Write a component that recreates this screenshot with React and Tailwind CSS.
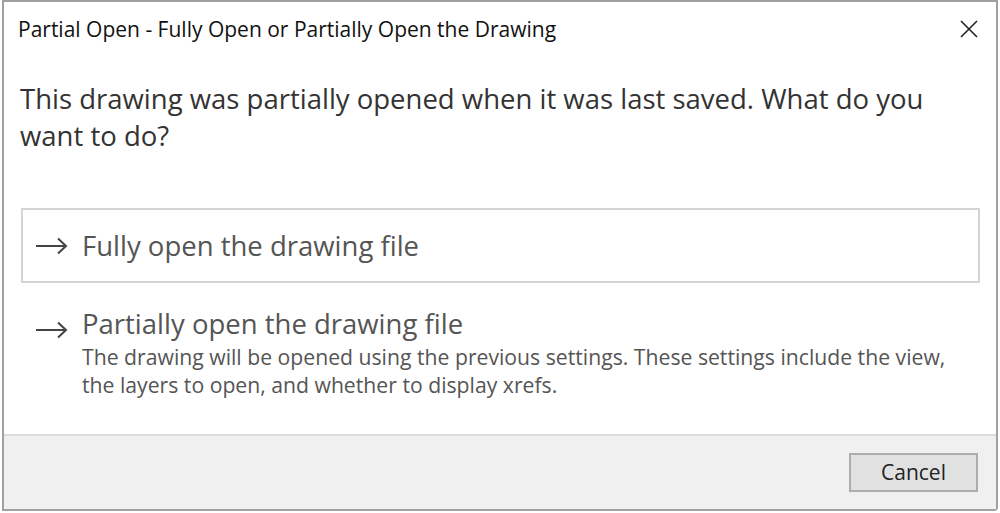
export default function App() {
  const font = { fontFamily: '"Open Sans", "Noto Sans", sans-serif' };
  const Arrow = () => (
    <svg width="34" height="20" viewBox="0 0 34 20" className="shrink-0">
      <path d="M1 10 H31 M23 2.5 L31 10 L23 17.5" fill="none" stroke="#444" strokeWidth="2" />
    </svg>
  );
  return (
    <div className="w-[1000px] h-[513px] bg-white" style={font}>
      <div className="ml-[2px] w-[996px] h-[511px] border-2 border-[#a0a0a0] rounded-br-[4px] flex flex-col bg-white">
        <div className="h-[56px] flex items-start justify-between pl-[14px] pr-[18px] pt-[14px]">
          <div className="text-[21px] leading-[26px] text-[#111]">Partial Open - Fully Open or Partially Open the Drawing</div>
          <svg width="18" height="18" viewBox="0 0 18 18" className="mt-[4px]">
            <path d="M1 1 L17 17 M17 1 L1 17" stroke="#222" strokeWidth="1.6" />
          </svg>
        </div>
        <div className="flex-1 flex flex-col px-[16px]">
          <div className="w-[915px] text-[27.5px] leading-[37px] text-[#333] pt-[22px]">
            This drawing was partially opened when it was last saved. What do you want to do?
          </div>
          <div className="mt-[54px] ml-[1px] h-[75px] border-2 border-[#d4d4d4] flex items-center pl-[12px] gap-[13px] text-[27.5px] text-[#555]">
            <Arrow />
            <span>Fully open the drawing file</span>
          </div>
          <div className="pt-[22px] pl-[15px] flex gap-[13px] text-[#555]">
            <div className="pt-[15px]"><Arrow /></div>
            <div className="flex flex-col">
              <span className="text-[27.5px] leading-[38px]">Partially open the drawing file</span>
              <span className="text-[21.2px] leading-[28px] w-[880px]">The drawing will be opened using the previous settings. These settings include the view, the layers to open, and whether to display xrefs.</span>
            </div>
          </div>
        </div>
        <div className="h-[75px] bg-[#f0f0f0] border-t-2 border-[#dcdcdc] flex items-center justify-end pr-[18px]">
          <button className="w-[129px] h-[39px] bg-[#e1e1e1] border-2 border-[#adadad] text-[21px] text-[#222]">Cancel</button>
        </div>
      </div>
    </div>
  );
}
